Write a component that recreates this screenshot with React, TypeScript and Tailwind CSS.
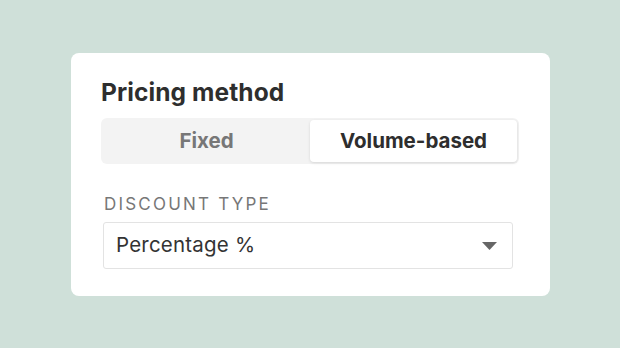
export default function App() {
  return (
    <div className="w-[620px] h-[348px] bg-[#cfe0d9] flex items-start justify-start pl-[71px] pt-[53px]" style={{ fontFamily: 'Inter, "Noto Sans", sans-serif' }}>
      <div className="w-[479px] h-[243px] bg-white rounded-[8px] px-[30px] pt-[23px] flex flex-col">
        <div className="text-[24.5px] leading-[32px] font-bold text-[#2e2e2e] tracking-[0.1px]">Pricing method</div>
        <div className="mt-[10px] w-[418px] h-[46px] bg-[#f3f3f3] rounded-[6px] flex p-[2px]">
          <div className="flex-1 flex items-center justify-center text-[20.5px] font-bold text-[#777777]">Fixed</div>
          <div className="flex-1 flex items-center justify-center text-[20.5px] font-bold text-[#2e2e2e] bg-white rounded-[4px] shadow-[0_1px_3px_rgba(0,0,0,0.12)]">Volume-based</div>
        </div>
        <div className="mt-[30px] text-[17px] leading-[20px] tracking-[2.2px] text-[#777777] pl-[3px]">DISCOUNT TYPE</div>
        <div className="mt-[8px] ml-[2px] w-[410px] h-[47px] border border-[#e3e3e3] rounded-[3px] flex items-center justify-between pl-[12px] pr-[15px]">
          <span className="text-[20.5px] text-[#333333] tracking-[0.2px]">Percentage %</span>
          <svg width="15" height="8" viewBox="0 0 15 8"><path d="M0 0 H15 L7.5 8 Z" fill="#666666" /></svg>
        </div>
      </div>
    </div>
  );
}
